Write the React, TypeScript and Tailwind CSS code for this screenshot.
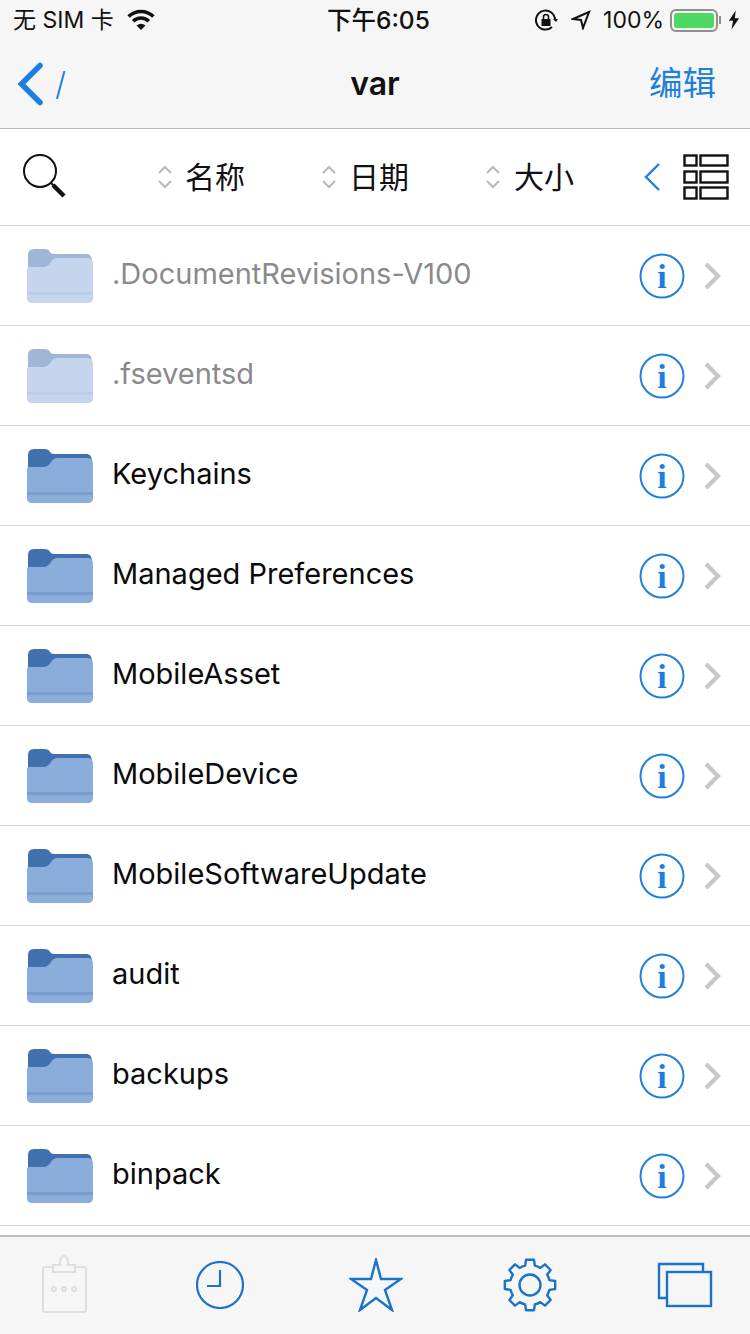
import React from "react";

const sans = { fontFamily: 'Inter, "Noto Sans CJK SC", sans-serif' };

type Row = { name: string; dim?: boolean };

const rows: Row[] = [
  { name: ".DocumentRevisions-V100", dim: true },
  { name: ".fseventsd", dim: true },
  { name: "Keychains" },
  { name: "Managed Preferences" },
  { name: "MobileAsset" },
  { name: "MobileDevice" },
  { name: "MobileSoftwareUpdate" },
  { name: "audit" },
  { name: "backups" },
  { name: "binpack" },
];

// 8 tooth gear outline around (27,27)
const gearPath = () => {
  const pt = (r: number, deg: number) => {
    const a = (deg * Math.PI) / 180;
    return `${(27 + r * Math.cos(a)).toFixed(2)} ${(27 + r * Math.sin(a)).toFixed(2)}`;
  };
  let d = "";
  for (let i = 0; i < 8; i++) {
    const c = -90 + i * 45;
    d += `${i === 0 ? "M" : "A20 20 0 0 1"} ${pt(20, c - 14)} L ${pt(25.5, c - 9)} L ${pt(25.5, c + 9)} L ${pt(20, c + 14)} `;
  }
  return `${d}A20 20 0 0 1 ${pt(20, -90 - 14)} Z`;
};

const Folder = ({ dim }: { dim?: boolean }) => (
  <svg width="68" height="56" viewBox="0 0 68 56" className={dim ? "opacity-50" : ""}>
    <path d="M2 7 Q2 1 8 1 H18 Q23 1 24 4 Q25 6 28 6 H61 Q65 6 66 12 V24 H2 Z" fill="#4170ae" />
    <path d="M1 21 Q1 19 3 19 H17 Q22 19 25 14 Q27 10 32 10 H62 Q67 10 67 16 V50 Q67 55 62 55 H6 Q1 55 1 50 Z" fill="#8aaddc" />
    <rect x="1" y="44" width="66" height="3" fill="#7a9dd0" />
  </svg>
);

const Sort = () => (
  <svg width="16" height="24" viewBox="0 0 16 24" fill="none" stroke="#b8b8b8" strokeWidth="2">
    <path d="M2 8 L8 2 L14 8" />
    <path d="M2 16 L8 22 L14 16" />
  </svg>
);

const SortHeader = ({ label }: { label: string }) => (
  <div className="flex w-[164px] items-center gap-[12px]">
    <Sort />
    <span className="text-[30px] leading-none text-[#111]">{label}</span>
  </div>
);

const FileRow = ({ name, dim }: Row) => (
  <div className="flex h-[100px] items-center border-b border-[#d9d9d9] pl-[26px] pr-[29px]">
    <Folder dim={dim} />
    <span className={`ml-[18px] mb-[3px] flex-1 text-[29px] ${dim ? "text-[#8a8a8a]" : "text-[#0a0a0a]"}`}>{name}</span>
    <svg width="46" height="46" viewBox="0 0 46 46">
      <circle cx="23" cy="23" r="21.5" fill="none" stroke="#1f80d8" strokeWidth="2" />
      <text x="23" y="34.5" textAnchor="middle" fontSize="34" fontWeight="700" fill="#1a7fe0" fontFamily="Liberation Serif, serif">i</text>
    </svg>
    <svg width="17" height="28" viewBox="0 0 17 28" fill="none" stroke="#c8c8c8" strokeWidth="4.4" className="ml-[19px]">
      <path d="M2 2 L14 14 L2 26" />
    </svg>
  </div>
);

export default function App() {
  return (
    <div className="flex h-[1334px] w-[750px] flex-col overflow-hidden bg-white" style={sans}>
      {/* status bar + nav */}
      <div className="h-[129px] shrink-0 border-b border-[#b8b8b8] bg-[#f6f6f6]">
        <div className="relative flex h-[40px] items-center justify-between pl-[13px] pr-[10px] text-[#111]">
          <div className="flex items-center text-[23px]">
            <span>无 SIM 卡</span>
            <svg width="30" height="22" viewBox="0 0 30 22" className="ml-[12px]" fill="none" stroke="#111" strokeWidth="3.6">
              <path d="M2.6 7.6 A17.5 17.5 0 0 1 27.4 7.6" />
              <path d="M7.2 12.2 A11 11 0 0 1 22.8 12.2" />
              <path d="M15 21 L10.5 16.5 Q15 13 19.5 16.5 Z" fill="#111" stroke="none" />
            </svg>
          </div>
          <span className="absolute left-[327px] top-[5px] text-[24.5px] font-medium leading-[30px]">下午6:05</span>
          <div className="flex items-center text-[24px]">
            <svg width="24" height="24" viewBox="0 0 24 24" fill="none" stroke="#111" strokeWidth="2">
              <path d="M21 12 A9.5 9.5 0 1 0 18 19" />
              <path d="M19 11 L22 14 L24 11" fill="#111" stroke="none" />
              <rect x="7.5" y="11" width="9" height="7" fill="#111" stroke="none" />
              <path d="M9.5 11 V9 A2.5 2.5 0 0 1 14.5 9 V11" strokeWidth="1.6" />
            </svg>
            <svg width="20" height="20" viewBox="0 0 20 20" className="ml-[13px]" fill="none" stroke="#111" strokeWidth="2">
              <path d="M18 2 L2 9 L10 10 L12 18 Z" />
            </svg>
            <span className="ml-[12px] text-[23px]">100%</span>
            <div className="ml-[6px] flex h-[23px] w-[48px] rounded-[6px] border-2 border-[#8f8f8f] p-[2px]">
              <div className="flex-1 rounded-[3px] bg-[#4cd964]" />
            </div>
            <div className="ml-[1px] h-[8px] w-[2px] bg-[#8f8f8f]" />
            <svg width="12" height="22" viewBox="0 0 14 24" className="ml-[7px]">
              <path d="M9 1 L1 13 H6 L4 23 L13 10 H8 Z" fill="#111" />
            </svg>
          </div>
        </div>
        <div className="relative flex h-[88px] items-center justify-between pl-[18px] pr-[34px]">
          <div className="flex items-center text-[#1f80d8]">
            <svg width="26" height="44" viewBox="0 0 26 44" fill="none" stroke="#1a7fe0" strokeWidth="5.5" strokeLinecap="round">
              <path d="M22 3.5 L3.5 22 L22 40.5" />
            </svg>
            <span className="ml-[11px] text-[32px] font-light leading-none">/</span>
          </div>
          <span className="absolute inset-x-0 text-center text-[32px] font-semibold text-[#111]">var</span>
          <span className="text-[33.5px] leading-none text-[#1f80d8]">编辑</span>
        </div>
      </div>

      {/* toolbar */}
      <div className="flex h-[97px] shrink-0 items-center border-b border-[#d9d9d9] pl-[22px] pr-[21px]">
        <svg width="46" height="46" viewBox="0 0 46 46" fill="none" stroke="#111" strokeWidth="2">
          <circle cx="18" cy="17" r="16" />
          <path d="M29 29 L32 32" />
          <path d="M31 31 L42 42" strokeWidth="4.4" />
        </svg>
        <div className="ml-[89px] flex">
          <SortHeader label="名称" />
          <SortHeader label="日期" />
          <div className="flex items-center gap-[13px]">
            <Sort />
            <span className="text-[30px] leading-none text-[#111]">大小</span>
          </div>
        </div>
        <svg width="18" height="30" viewBox="0 0 18 30" fill="none" stroke="#1f80d8" strokeWidth="2.4" className="ml-auto">
          <path d="M16 2 L3 15 L16 28" />
        </svg>
        <svg width="46" height="46" viewBox="0 0 46 46" fill="none" stroke="#111" strokeWidth="2.4" className="ml-[22px]">
          <rect x="1.5" y="1.5" width="12" height="10" />
          <rect x="17.5" y="1.5" width="27" height="10" />
          <rect x="1.5" y="17.5" width="12" height="11" />
          <rect x="17.5" y="17.5" width="27" height="11" />
          <rect x="1.5" y="33.5" width="12" height="11" />
          <rect x="17.5" y="33.5" width="27" height="11" />
        </svg>
      </div>

      {/* list */}
      <div className="flex-1 overflow-hidden">
        {rows.map((r) => (
          <FileRow key={r.name} {...r} />
        ))}
      </div>

      {/* tab bar */}
      <div className="flex h-[99px] shrink-0 items-center border-t-2 border-[#bdbdbd] bg-[#f6f6f6] pb-[2px] pl-[42px]">
        <svg width="46" height="60" viewBox="0 0 46 60" fill="none" stroke="#dedede" strokeWidth="2">
          <rect x="1" y="12" width="43" height="45" rx="2" />
          <path d="M11 17 V10 H18 Q18 1 22 1 Q26 1 26 10 H33 V17 Z" fill="#f6f6f6" />
          <circle cx="12" cy="34" r="2" />
          <circle cx="22" cy="34" r="2" />
          <circle cx="32" cy="34" r="2" />
        </svg>
        <svg width="48" height="48" viewBox="0 0 48 48" fill="none" stroke="#1a73c8" strokeWidth="2.2" className="ml-[108px]">
          <circle cx="24" cy="24" r="23" />
          <path d="M24 9 V25 H11" />
        </svg>
        <svg width="54" height="54" viewBox="0 0 54 54" fill="none" stroke="#1a73c8" strokeWidth="2.4" className="ml-[105px]">
          <path d="M27 2 L32 21 H52 L36 32 L43 52 L27 40 L11 52 L18 32 L2 21 H22 Z" />
        </svg>
        <svg width="54" height="54" viewBox="0 0 54 54" fill="none" stroke="#1a73c8" strokeWidth="2.4" strokeLinejoin="round" className="ml-[100px]">
          <circle cx="27" cy="27" r="10.5" />
          <path d={gearPath()} />
        </svg>
        <svg width="56" height="46" viewBox="0 0 56 46" fill="none" stroke="#1a73c8" strokeWidth="2.4" className="ml-[100px]">
          <path d="M9 36 H2 V2 H46 V9" />
          <rect x="10" y="10" width="44" height="34" />
        </svg>
      </div>
    </div>
  );
}
